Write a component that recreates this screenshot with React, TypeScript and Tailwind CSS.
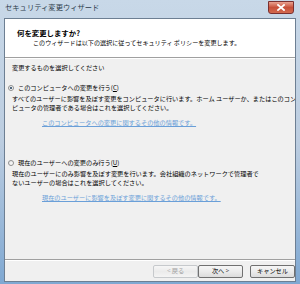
const jp = "font-['Noto_Sans_CJK_JP','Noto_Sans',sans-serif]";

function Radio({ checked }: { checked?: boolean }) {
  return (
    <span className="w-[6px] h-[6px] rounded-full border border-[#8e8f8f] bg-gradient-to-br from-[#e6e6e6] to-white flex items-center justify-center shrink-0">
      {checked && <span className="w-[2px] h-[2px] rounded-full bg-[#1a3a5a]" />}
    </span>
  );
}

function Button({ label, disabled }: { label: string; disabled?: boolean }) {
  return (
    <div
      className={`w-[45px] h-[13px] rounded-[2px] border flex items-center justify-center text-[6.2px] leading-none bg-gradient-to-b from-[#f6f6f6] via-[#ebebeb] to-[#dcdcdc] ${
        disabled ? 'border-[#c6c9cc] text-[#a0a0a0] from-[#f4f4f4] to-[#f4f4f4]' : 'border-[#707070] text-black'
      }`}
    >
      {label}
    </div>
  );
}

export default function App() {
  return (
    <div className={`w-[300px] h-[284px] flex flex-col overflow-hidden bg-gradient-to-b from-[#c8d8e8] via-[#bccde0] to-[#7fa8d2] ${jp}`}>
      {/* Title bar */}
      <div className="h-[18px] flex justify-between items-start pl-[5px] pr-[6px] shrink-0">
        <span className="text-[7.3px] leading-[9px] text-[#2b3a4a] mt-[3px]">セキュリティ変更ウィザード</span>
        <div className="w-[26px] h-[13px] mt-[1px] rounded-b-[3px] border border-[#7a3030] bg-gradient-to-b from-[#e9a291] via-[#c7503a] to-[#d36a4f] flex items-center justify-center">
          <svg width="8" height="7" viewBox="0 0 8 7">
            <path d="M1 1 L7 6 M7 1 L1 6" stroke="#ffffff" strokeWidth="1.8" strokeLinecap="square" />
          </svg>
        </div>
      </div>

      {/* Client area */}
      <div className="mx-[4px] mr-[4px] border border-[#6d7f93] flex flex-col h-[264px] shrink-0 bg-[#f0f0f0]">
        {/* Header */}
        <div className="bg-white h-[39px] pt-[9px] pl-[12px] border-b border-[#a0a0a0] shrink-0">
          <div className="text-[7.4px] leading-[9px] font-bold text-black">何を変更しますか?</div>
          <div className="text-[6.1px] leading-[9px] text-black pl-[16px] mt-[1px] whitespace-nowrap">
            このウィザードは以下の選択に従ってセキュリティ ポリシーを変更します。
          </div>
        </div>
        <div className="h-px bg-white shrink-0" />

        {/* Body */}
        <div className="flex-1 text-[6.2px] leading-[9px] text-black pl-[7px] pt-[4px] overflow-hidden whitespace-nowrap">
          <div>変更するものを選択してください</div>

          <div className="mt-[11px] flex items-center gap-[4px] -ml-[4px]">
            <Radio checked />
            <span>このコンピュータへの変更を行う(<span className="underline">C</span>)</span>
          </div>
          <div className="mt-[2px]">
            <div>すべてのユーザーに影響を及ぼす変更をコンピュータに行います。ホーム ユーザーか、またはこのコン</div>
            <div>ピュータの管理者である場合はこれを選択してください。</div>
          </div>
          <div className="mt-[6px] pl-[30px] text-[#6a9fd8] underline">このコンピュータへの変更に関するその他の情報です。</div>

          <div className="mt-[31px] flex items-center gap-[4px] -ml-[4px]">
            <Radio />
            <span>現在のユーザーへの変更のみ行う(<span className="underline">U</span>)</span>
          </div>
          <div className="mt-[2px]">
            <div>現在のユーザーにのみ影響を及ぼす変更を行います。会社組織のネットワークで管理者で</div>
            <div>ないユーザーの場合はこれを選択してください。</div>
          </div>
          <div className="mt-[6px] pl-[30px] text-[#6a9fd8] underline">現在のユーザーに影響を及ぼす変更に関するその他の情報です。</div>
        </div>

        {/* Footer */}
        <div className="border-t border-[#a0a0a0] shrink-0">
          <div className="h-px bg-white" />
          <div className="h-[20px] flex items-start justify-end pt-[4px] pr-[0px] gap-[7px]">
            <div className="flex">
              <Button label="< 戻る" disabled />
              <Button label="次へ >" />
            </div>
            <Button label="キャンセル" />
          </div>
        </div>
      </div>
    </div>
  );
}
